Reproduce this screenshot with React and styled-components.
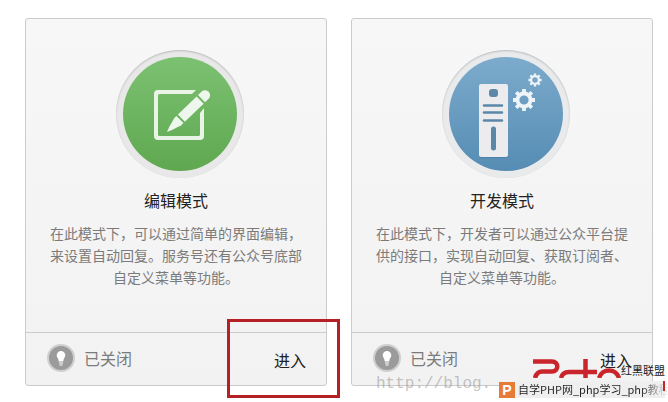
import React from 'react';
import styled, { createGlobalStyle } from 'styled-components';

const GlobalStyle = createGlobalStyle`
    * {
        box-sizing: border-box;
    }
    body {
        margin: 0;
        background: #fff;
        font-family: 'Noto Sans CJK SC', sans-serif;
        font-size: 14px;
        color: #222;
    }
`;

const Page = styled.main`
    position: relative;
    padding: 18px 15px 16px 25px;
    overflow: hidden;
`;

const ModeList = styled.div`
    display: grid;
    grid-template-columns: 1fr 1fr;
    gap: 24px;
`;

const Card = styled.section`
    display: flex;
    flex-direction: column;
    border: 1px solid #cbcbcb;
    border-radius: 3px;
    background: linear-gradient(#f7f7f7, #f2f2f2);
`;

const CardBody = styled.div`
    flex: 1;
    padding: 31px 24px 44px;
    text-align: center;
`;

const Medallion = styled.div`
    width: 128px;
    height: 128px;
    margin: 0 auto 11px;
    padding: 7px;
    position: relative;
    left: 4px;
    border-radius: 50%;
    background: ${props => props.$ring};
    box-shadow: inset 0 1px 2px rgba(0, 0, 0, 0.2);
`;

const Disc = styled.svg`
    display: block;
    width: 114px;
    height: 114px;
    border-radius: 50%;
    background: linear-gradient(${props => props.$from}, ${props => props.$to});
`;

const Title = styled.h2`
    margin: 0;
    font-size: 16px;
    font-weight: 400;
    line-height: 22px;
`;

const Description = styled.p`
    margin: 11px 0 0;
    color: #7b7b7b;
    line-height: 22px;
`;

const CardFooter = styled.footer`
    position: relative;
    display: flex;
    justify-content: space-between;
    height: 53px;
    padding: 0 20px 0 21px;
    border-top: 1px solid #cbcbcb;
    font-size: 16px;
    line-height: 24px;
`;

const Status = styled.span`
    display: flex;
    align-items: center;
    gap: 9px;
    height: 50px;
    color: #7b7b7b;
`;

const Enter = styled.a`
    padding-top: 15px;
    color: #222;
    text-decoration: none;
`;

const Highlight = styled.div`
    position: absolute;
    top: -14px;
    right: -14px;
    width: 113px;
    height: 79px;
    border: 3px solid #b52025;
    pointer-events: none;
`;

const BlogMark = styled.div`
    position: absolute;
    left: 376px;
    bottom: 8px;
    color: rgba(140, 140, 140, 0.5);
    font: 16px/20px 'Liberation Mono', monospace;
`;

const Stamp = styled.div`
    position: absolute;
    right: 3px;
    bottom: 4px;
    width: 166px;
`;

const Brand = styled.div`
    display: flex;
    align-items: flex-start;
    justify-content: flex-end;
    height: 22px;
    font-size: 11px;
    line-height: 22px;
`;

const SiteBar = styled.div`
    position: relative;
    display: flex;
    align-items: center;
    gap: 3px;
    height: 17px;
    background: #efefef;
    font-size: 11px;
    line-height: 17px;
    white-space: nowrap;

    &::after {
        content: '';
        position: absolute;
        top: 0;
        right: 0;
        width: 2px;
        height: 10px;
        background: #c9252b;
    }
`;

const SiteBadge = styled.span`
    flex: none;
    width: 16px;
    height: 16px;
    background: #e87a38;
    color: #fff;
    font: bold 14px/16px 'Liberation Sans', sans-serif;
    text-align: center;
`;

const SiteName = styled.span`
    background: linear-gradient(90deg, #222 80%, #efefef 98%);
    background-clip: text;
    color: transparent;
`;

const EditIcon = () =>
    <Disc viewBox="0 0 114 114" $from="#7cc172" $to="#5fa850" aria-hidden="true">
        <path
            d="M36 33h37l-4 4H36.500a1.500 1.500 0 0 0-1.500 1.500v39a1.500 1.500 0 0 0 1.500 1.500h39a1.500 1.500 0 0 0 1.500-1.500V56l4-5v28a4 4 0 0 1-4 4H35a4 4 0 0 1-4-4V37a4 4 0 0 1 4-4z"
            fill="#e9f4e7"
        />
        <g transform="translate(44 75) rotate(-44)" fill="#eef7ec">
            <path d="M0 0 5-2 15-5 18-5V5H15L5 2Z" />
            <path d="M20-5H46V5H20Z" />
            <path d="M48-5h5a5 5 0 0 1 0 10h-5Z" />
        </g>
    </Disc>;

const Gear = ({ x, y, size }) =>
    <g transform={`translate(${x} ${y}) scale(${size})`}>
        <circle r="6.500" fill="none" stroke="#eef4f8" strokeWidth="3.800" />
        {[0, 45, 90, 135, 180, 225, 270, 315].map(angle =>
            <path
                key={angle}
                d="M-1.900-7h3.800v-4h-3.800z"
                fill="#eef4f8"
                transform={`rotate(${angle})`}
            />
        )}
    </g>;

const ServerIcon = () =>
    <Disc viewBox="0 0 114 114" $from="#7cabcc" $to="#568cb3" aria-hidden="true">
        <rect x="30" y="28" width="29" height="73" rx="2" fill="#3f7297" opacity="0.5" />
        <rect x="30" y="27" width="29" height="73" rx="2" fill="#ececee" />
        <rect x="40" y="32" width="9" height="8" rx="3" fill="#5b87a8" />
        <path
            d="M35 48.500h18M35 55.500h18M35 63.500h18"
            stroke="#5b87a8"
            strokeWidth="2.600"
            strokeLinecap="round"
        />
        <path d="M44.500 72v19" stroke="#5b87a8" strokeWidth="5" strokeLinecap="round" />
        <Gear x={75} y={43} size={1} />
        <Gear x={86} y={23} size={0.6} />
    </Disc>;

const LampIcon = () =>
    <svg width="28" height="28" viewBox="0 0 28 28" aria-hidden="true">
        <circle cx="14" cy="14" r="14" fill="#cfcfcf" />
        <circle cx="14" cy="14" r="12" fill="#9b9b9b" />
        <path
            d="M14 7a4.300 4.300 0 0 0-4.300 4.300c0 2.200 1.900 3.200 2.100 6.200h4.400c.2-3 2.100-4 2.100-6.200A4.300 4.300 0 0 0 14 7z"
            fill="#fff"
        />
        <path d="M12 19h4M12.500 21h3" stroke="#fff" />
    </svg>;

const BrandLogo = () =>
    <svg width="88" height="19" viewBox="0 0 88 19" aria-hidden="true">
        <g fill="none" stroke="#c9252b" strokeWidth="4.500">
            <path d="M0 2.500h19c7 0 7 10 0 10H9c-4 0-6 3-7 6.500" />
            <path d="M28 19c1-4 4-6 8-6h28M52.500 0v19M66 19c3-10 17-10 20 0" />
        </g>
    </svg>;

const ModeCard = ({ title, description, icon, ring, highlighted }) =>
    <Card>
        <CardBody>
            <Medallion $ring={ring}>{icon}</Medallion>
            <Title>{title}</Title>
            <Description>{description}</Description>
        </CardBody>
        <CardFooter>
            <Status>
                <LampIcon />
                已关闭
            </Status>
            <Enter href="#">进入</Enter>
            {highlighted && <Highlight />}
        </CardFooter>
    </Card>;

const App = () =>
    <Page>
        <GlobalStyle />
        <ModeList>
            <ModeCard
                title="编辑模式"
                description="在此模式下，可以通过简单的界面编辑，来设置自动回复。服务号还有公众号底部自定义菜单等功能。"
                icon={<EditIcon />}
                ring="#e9e8e9"
                highlighted
            />
            <ModeCard
                title="开发模式"
                description="在此模式下，开发者可以通过公众平台提供的接口，实现自动回复、获取订阅者、自定义菜单等功能。"
                icon={<ServerIcon />}
                ring="#e9eaeb"
            />
        </ModeList>
        <BlogMark>http://blog.</BlogMark>
        <Stamp>
            <Brand>
                <BrandLogo />
                红黑联盟
            </Brand>
            <SiteBar>
                <SiteBadge>P</SiteBadge>
                <SiteName>自学PHP网_php学习_php教程</SiteName>
            </SiteBar>
        </Stamp>
    </Page>;

export default App;
